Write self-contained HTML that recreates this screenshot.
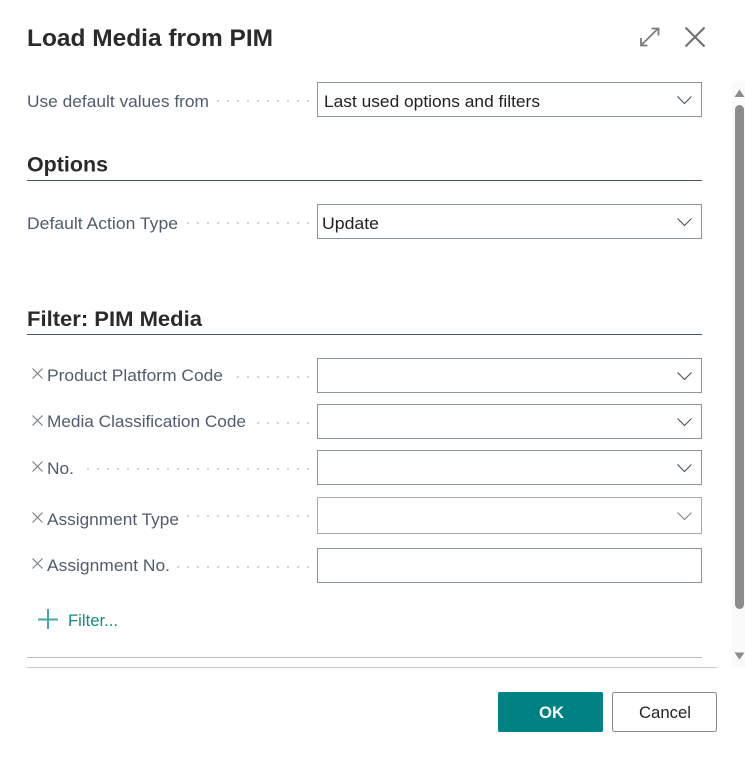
<!DOCTYPE html>
<html lang="en">
<head>
<meta charset="utf-8">
<title>Load Media from PIM</title>
<style>
html,body{margin:0;padding:0;width:745px;height:759px;background:#fff;overflow:hidden}
svg{display:block}
text{font-family:"Liberation Sans",sans-serif;white-space:pre}
.h{font-weight:bold;fill:#2a2a2a}
.l{font-size:16.5px;fill:#505c6d}
.v{font-size:16.5px;fill:#212121}
.b{fill:#fff;stroke:#8a94a4;stroke-width:1}
.d{stroke:#d2d3d5;stroke-width:2;stroke-dasharray:2 8;fill:none}
.c{fill:none;stroke:#3c4a5c;stroke-width:1}
.x{fill:none;stroke:#6f7784;stroke-width:1}
</style>
</head>
<body>
<svg width="745" height="759" viewBox="0 0 745 759" xmlns="http://www.w3.org/2000/svg">
<rect width="745" height="759" fill="#fff"/>

<text class="h" x="27" y="46" font-size="24" textLength="246" lengthAdjust="spacingAndGlyphs">Load Media from PIM</text>

<path d="M641 45.500 658 28.500M651.500 28.500H658.500V35.500M641 38V45.500H647.500" fill="none" stroke="#7c7c7c" stroke-width="1.800"/>
<path d="M685.500 27.500 704.500 46.500M704.500 27.500 685.500 46.500" fill="none" stroke="#6e6e6e" stroke-width="2"/>

<rect x="732" y="82" width="13" height="585" fill="#fafafa"/>
<path d="M739.500 89.500 744.500 97H734.500Z" fill="#8c8c8c"/>
<rect x="735" y="105" width="9" height="504" rx="4.500" fill="#8c8c8c"/>
<path d="M734.500 652.500H744.500L739.500 659.500Z" fill="#8c8c8c"/>

<text class="l" x="27" y="107" textLength="182" lengthAdjust="spacingAndGlyphs">Use default values from</text>
<path class="d" d="M217 101H309"/>
<rect class="b" x="317.500" y="82.500" width="384" height="34"/>
<text class="v" x="324" y="107" textLength="216" lengthAdjust="spacingAndGlyphs">Last used options and filters</text>
<path class="c" d="M677.500 96.500 684.500 103.500 691.500 96.500"/>

<text class="h" x="27" y="171.500" font-size="21" textLength="81" lengthAdjust="spacingAndGlyphs">Options</text>
<rect x="27" y="180" width="675" height="1" fill="#4a5568"/>

<text class="l" x="27" y="229" textLength="151" lengthAdjust="spacingAndGlyphs">Default Action Type</text>
<path class="d" d="M187 223H309"/>
<rect class="b" x="317.500" y="204.500" width="384" height="34"/>
<text class="v" x="322" y="229" textLength="57" lengthAdjust="spacingAndGlyphs">Update</text>
<path class="c" d="M677.500 218.500 684.500 225.500 691.500 218.500"/>

<text class="h" x="27" y="326" font-size="21" textLength="175" lengthAdjust="spacingAndGlyphs">Filter: PIM Media</text>
<rect x="27" y="334" width="675" height="1" fill="#4a5568"/>

<path class="x" d="M32.500 368.500 42.500 378.500M42.500 368.500 32.500 378.500"/>
<text class="l" x="47" y="381" textLength="176" lengthAdjust="spacingAndGlyphs">Product Platform Code</text>
<path class="d" d="M237 377H309"/>
<rect class="b" x="317.500" y="358.500" width="384" height="34"/>
<path class="c" d="M677.500 372.500 684.500 379.500 691.500 372.500"/>

<path class="x" d="M32.500 415.500 42.500 425.500M42.500 415.500 32.500 425.500"/>
<text class="l" x="47" y="427" textLength="199" lengthAdjust="spacingAndGlyphs">Media Classification Code</text>
<path class="d" d="M257 423H309"/>
<rect class="b" x="317.500" y="404.500" width="384" height="34"/>
<path class="c" d="M677.500 418.500 684.500 425.500 691.500 418.500"/>

<path class="x" d="M32.500 461.500 42.500 471.500M42.500 461.500 32.500 471.500"/>
<text class="l" x="47" y="474" textLength="27" lengthAdjust="spacingAndGlyphs">No.</text>
<path class="d" d="M87 469H309"/>
<rect class="b" x="317.500" y="450.500" width="384" height="34"/>
<path class="c" d="M677.500 464.500 684.500 471.500 691.500 464.500"/>

<path class="x" d="M32.500 512.500 42.500 522.500M42.500 512.500 32.500 522.500"/>
<text class="l" x="47" y="525" textLength="132" lengthAdjust="spacingAndGlyphs">Assignment Type</text>
<path class="d" d="M187 516H309"/>
<rect x="317.500" y="497.500" width="384" height="36" fill="#fff" stroke="#a6abb3" stroke-width="1"/>
<path d="M677.500 512.500 684.500 519.500 691.500 512.500" fill="none" stroke="#77808c" stroke-width="1"/>

<path class="x" d="M32.500 558.500 42.500 568.500M42.500 558.500 32.500 568.500"/>
<text class="l" x="47" y="571" textLength="123" lengthAdjust="spacingAndGlyphs">Assignment No.</text>
<path class="d" d="M177 567H309"/>
<rect class="b" x="317.500" y="548.500" width="384" height="34"/>

<path d="M38 619.500H58M48 609V629" fill="none" stroke="#46a5a5" stroke-width="2"/>
<text x="68" y="626" font-size="16.500" fill="#148a8a" textLength="50" lengthAdjust="spacingAndGlyphs">Filter...</text>

<rect x="27" y="657" width="675" height="1" fill="#bdbdbd"/>
<rect x="27" y="667" width="690" height="1" fill="#c8c8c8"/>

<rect x="498" y="692" width="105" height="40" rx="2" fill="#008284"/>
<text x="539" y="718" font-size="16.500" font-weight="bold" fill="#fff" textLength="25" lengthAdjust="spacingAndGlyphs">OK</text>
<rect x="612.500" y="692.500" width="104" height="39" rx="2" fill="#fff" stroke="#8a8a8a" stroke-width="1"/>
<text x="639" y="718" font-size="16.500" fill="#262626" textLength="52" lengthAdjust="spacingAndGlyphs">Cancel</text>
</svg>
</body>
</html>
